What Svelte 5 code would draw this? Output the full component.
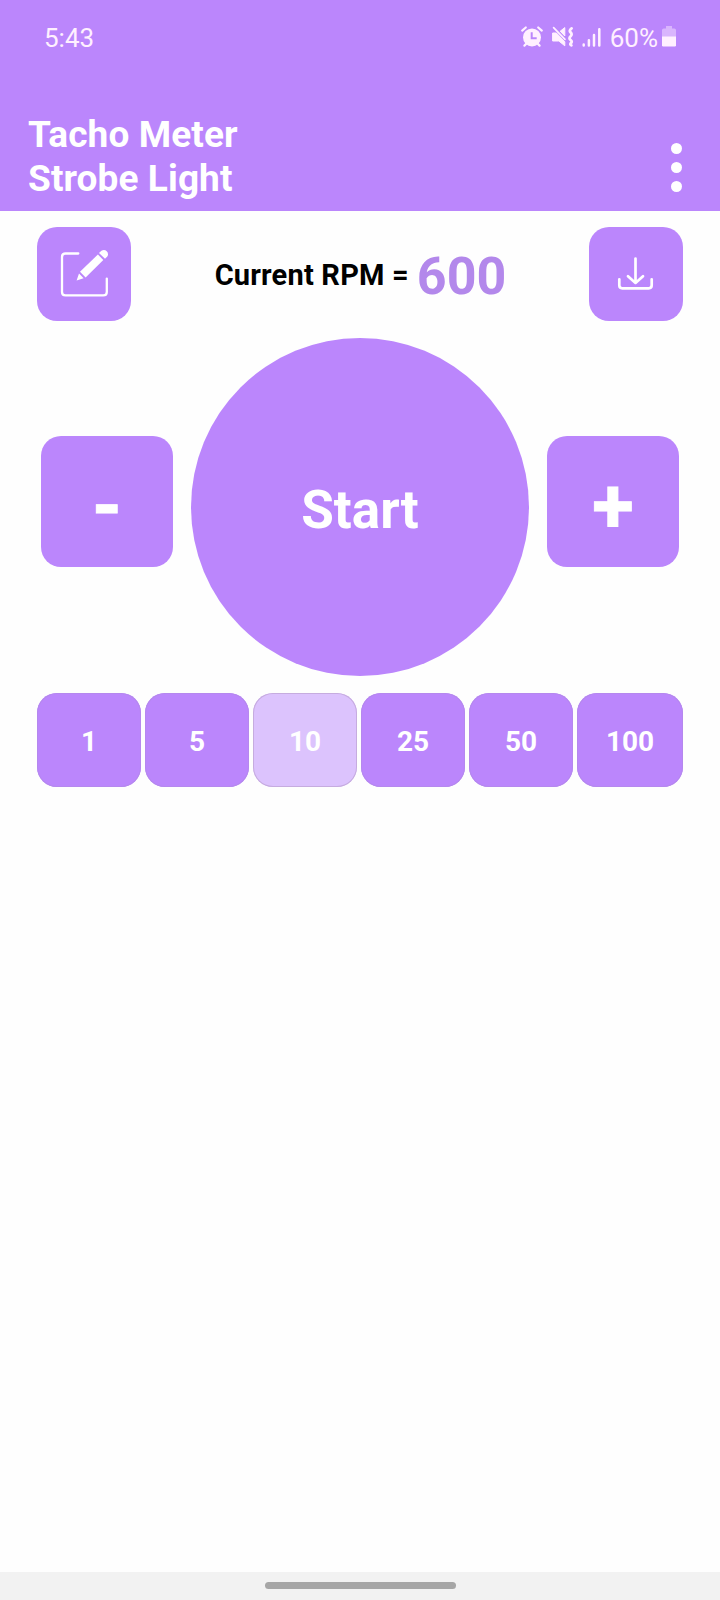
<script lang="ts">
	const steps = [1, 5, 10, 25, 50, 100];

	let rpm     = $state(600);
	let step    = $state(10);
	let running = $state(false);
</script>

<div class="screen">
	<!-- ── status bar + title ── -->
	<header class="app-bar">
		<div class="status">
			<span class="clock">5:43</span>
			<div class="status-right">
				<svg class="ico-alarm" width="24" height="24" viewBox="0 0 24 24">
					<circle cx="12" cy="12.4" r="9" fill="currentColor" />
					<path d="M2.2 5.6 5.8 2.5M21.8 5.6 18.2 2.5M4.4 20.6 6.8 18.2M19.6 20.6 17.2 18.2" stroke="currentColor" stroke-width="2.2" stroke-linecap="round" />
					<path d="M11.7 7.2v6h5" fill="none" stroke="#bb86fc" stroke-width="2" />
				</svg>
				<svg class="ico-mute" width="24" height="24" viewBox="0 0 24 24">
					<path d="M1.6 8h3.8l8.4 8.8v4L7.8 16H1.6zM9.2 6.2l4.6-3.6v8.4z" fill="currentColor" stroke="currentColor" stroke-width="1" stroke-linejoin="round" />
					<path d="M2.6 2.6 14 14.4" stroke="currentColor" stroke-width="1.7" stroke-linecap="round" />
					<path d="M20.6 3.4q-3 2.2-1 4t0 3.8q-2.2 2 0 3.8t0 3.4q-.6 1.2.8 2" fill="none" stroke="currentColor" stroke-width="2.8" stroke-linecap="round" />
				</svg>
				<svg class="ico-signal" width="20" height="20" viewBox="0 0 20 20">
					<path d="M1.7 16.6v1M6.9 12.3v5.3M12 7v10.6M17.3 1.2v16.4" stroke="currentColor" stroke-width="2.5" stroke-linecap="round" />
				</svg>
				<span class="percent">60%</span>
				<svg class="ico-battery" width="14" height="22" viewBox="0 0 14 22">
					<path d="M4 0h6v2.6h2.3q1.7 0 1.7 1.7V11H0V4.3q0-1.7 1.7-1.7H4z" fill="currentColor" opacity=".45" />
					<path d="M0 10.5h14v8.8q0 1.2-1.2 1.2H1.2Q0 20.5 0 19.3z" fill="currentColor" />
				</svg>
			</div>
		</div>
		<div class="title-row">
			<h1>Tacho Meter<br />Strobe Light</h1>
			<button class="menu" aria-label="More options"><i></i><i></i><i></i></button>
		</div>
	</header>

	<main>
		<div class="rpm-row">
			<button class="tile" aria-label="Edit">
				<svg width="94" height="94" viewBox="0 0 94 94">
					<path d="M41.3 26.5H28.5q-3.5 0-3.5 3.5v34.9q0 3.5 3.5 3.5h37.8q3.5 0 3.5-3.5V51.6" fill="none" stroke="#fff" stroke-width="2.3" stroke-linecap="round" />
					<path d="M43 44.7 60.9 27.4 66.3 33 48.6 50.6zM62 26l2.4-2.2q3-1.8 5.3.5t.6 5.2L68 31.8zM42 46.4l4.6 4.8-7 2.2z" fill="#fff" />
				</svg>
			</button>
			<div class="readout"><span class="label">Current RPM =</span><span class="value">{rpm}</span></div>
			<button class="tile" aria-label="Save">
				<svg width="94" height="94" viewBox="0 0 94 94">
					<path d="M46.5 31.5V55M39 49.2l7.5 6.7 7.5-6.7M30.3 52.3v6q0 3 3 3h26.4q3 0 3-3v-6" fill="none" stroke="#fff" stroke-width="2.7" stroke-linecap="round" stroke-linejoin="round" />
				</svg>
			</button>
		</div>

		<div class="dial-row">
			<button class="adjust" onclick={() => (rpm -= step)}>-</button>
			<button class="dial" onclick={() => (running = !running)}>{running ? 'Stop' : 'Start'}</button>
			<button class="adjust" onclick={() => (rpm += step)}>+</button>
		</div>

		<div class="steps">
			{#each steps as s}
				<button class="step" class:selected={s === step} onclick={() => (step = s)}>{s}</button>
			{/each}
		</div>
	</main>

	<div class="nav-bar"><div class="nav-handle"></div></div>
</div>

<style>
	:global(body) { background: #fff; }
	.screen { display: flex; flex-direction: column; width: 720px; height: 1600px; overflow: hidden; font-family: Roboto, sans-serif; background: #fefefe; }
	button { box-sizing: border-box; border: none; margin: 0; padding: 0; font: inherit; font-weight: 700; color: #fff; background: #bb86fc; cursor: pointer; }
	svg { display: block; flex: none; }

	/* app bar */
	.app-bar { flex: none; box-sizing: border-box; height: 211px; background: #bb86fc; color: #fff; }
	.status { display: flex; align-items: flex-start; justify-content: space-between; height: 113px; padding: 23px 44px 0; box-sizing: border-box; color: #fff0ff; font-size: 26px; line-height: 30px; }
	.status-right { display: flex; align-items: flex-start; }
	.ico-alarm { margin: 2px 7px 0 0; }
	.ico-mute { margin: 2px 7px 0 0; }
	.ico-signal { margin: 5px 8px 0 0; }
	.ico-battery { margin: 3px 0 0 4px; }
	.title-row { display: flex; justify-content: space-between; padding: 0 38px 0 28px; }
	h1 { margin: 0; font-size: 37px; font-weight: 700; line-height: 44px; letter-spacing: .1px; }
	.menu { display: flex; flex-direction: column; gap: 8px; padding-top: 30px; background: none; }
	.menu i { width: 11px; height: 11px; border-radius: 50%; background: #fff; }

	main { flex: 1; padding: 16px 37px 0; }

	/* rpm readout */
	.rpm-row { display: flex; align-items: center; justify-content: space-between; }
	.tile { width: 94px; height: 94px; border-radius: 20px; }
	.readout { display: flex; align-items: center; padding: 2px 0 0 1px; }
	.label { font-size: 29px; font-weight: 700; letter-spacing: .2px; color: #000; }
	.value { margin-left: 8px; padding-top: 3px; font-size: 52px; font-weight: 700; line-height: 60px; color: #b388eb; }

	/* start dial */
	.dial-row { display: flex; justify-content: space-between; align-items: flex-start; margin: 17px 4px 0; }
	.adjust { display: flex; align-items: center; justify-content: center; width: 132px; height: 131px; margin-top: 98px; padding-top: 8px; border-radius: 20px; font-size: 76px; line-height: 90px; -webkit-text-stroke: .8px #fff; }
	.dial { width: 338px; height: 338px; padding-top: 5px; border-radius: 50%; font-size: 53px; }

	/* step sizes */
	.steps { display: grid; grid-template-columns: repeat(5, 104px) 106px; gap: 4px; margin-top: 17px; }
	.step { height: 94px; padding-top: 2px; border-radius: 20px; font-size: 28px; box-shadow: inset 0 0 0 1px #b588ee; }
	.step.selected { background: #dcc3fd; box-shadow: inset 0 0 0 1px #c6acdf; }

	/* gesture bar */
	.nav-bar { flex: none; display: flex; justify-content: center; height: 28px; background: #f2f2f2; }
	.nav-handle { width: 191px; height: 7px; margin-top: 10px; border-radius: 4px; background: #a6a6a6; }
</style>
